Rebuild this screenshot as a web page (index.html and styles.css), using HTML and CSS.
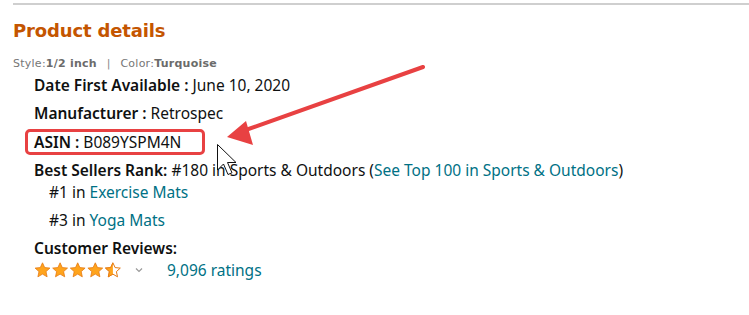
FILE: index.html
```html
<!DOCTYPE html>
<html lang="en">

<head>
    <meta charset="UTF-8">
    <meta name="viewport" content="width=device-width, initial-scale=1.0">
    <title>Product details</title>
    <link rel="stylesheet" href="styles.css">
</head>

<body>
    <div id="page">
        <hr class="rule">
        <h2 class="title">Product details</h2>
        <div class="variation">
            <span class="label">Style:</span><b>1/2 inch</b>
            <span class="sep">|</span>
            <span class="label">Color:</span><b>Turquoise</b>
        </div>
        <ul class="details">
            <li><b>Date First Available :</b> June 10, 2020</li>
            <li><b>Manufacturer :</b> Retrospec</li>
            <li class="asin"><span class="marked"><b>ASIN :</b> B089YSPM4N</span></li>
            <li>
                <b>Best Sellers Rank:</b> #180 in Sports &amp; Outdoors (<a href="#">See Top 100 in Sports &amp; Outdoors</a>)
                <ul class="ranks">
                    <li>#1 in <a href="#">Exercise Mats</a></li>
                    <li>#3 in <a href="#">Yoga Mats</a></li>
                </ul>
            </li>
            <li class="reviews">
                <b>Customer Reviews:</b>
                <div class="rating">
                    <span class="stars">
                        <svg width="88" height="16" viewBox="0 0 88 16">
                            <defs>
                                <polygon id="star" points="8.5,0.8 10.7,5.6 15.9,6.1 12,9.6 13.1,14.8 8.5,12.1 3.9,14.8 5,9.6 1.1,6.1 6.3,5.6"/>
                                <clipPath id="half"><rect x="70.4" y="0" width="8.5" height="16"/></clipPath>
                            </defs>
                            <use href="#star" x="0" fill="#ffa41c" stroke="#e47911" stroke-width="0.8"/>
                            <use href="#star" x="17.6" fill="#ffa41c" stroke="#e47911" stroke-width="0.8"/>
                            <use href="#star" x="35.2" fill="#ffa41c" stroke="#e47911" stroke-width="0.8"/>
                            <use href="#star" x="52.8" fill="#ffa41c" stroke="#e47911" stroke-width="0.8"/>
                            <use href="#star" x="70.4" fill="#fff" stroke="#e47911" stroke-width="1"/>
                            <g clip-path="url(#half)">
                                <use href="#star" x="70.4" fill="#ffa41c" stroke="#e47911" stroke-width="0.8"/>
                            </g>
                        </svg>
                    </span>
                    <span class="chevron">
                        <svg width="8" height="6" viewBox="0 0 8 6"><path d="M1 1.5 L4 4.5 L7 1.5" fill="none" stroke="#999" stroke-width="1.2"/></svg>
                    </span>
                    <a href="#" class="count">9,096 ratings</a>
                </div>
            </li>
        </ul>

        <svg class="markup" width="749" height="315" viewBox="0 0 749 315">
            <line x1="423" y1="67" x2="240" y2="132" stroke="#e84142" stroke-width="4" stroke-linecap="round"/>
            <polygon points="227,137 246,121 253,145" fill="#e84142"/>
            <path d="M217.5 144.5 L217.5 170 L223.5 164 L228 174.5 L232 172.8 L227.5 162.5 L236 162.5 Z" fill="#fff" stroke="#111" stroke-width="1"/>
        </svg>
    </div>
</body>

</html>
```

FILE: styles.css
```css
* {
    box-sizing: border-box;
}

body {
    margin: 0;
    background-color: #fff;
    color: #0f1111;
    font-family: 'Noto Sans', 'Open Sans', sans-serif;
    font-size: 14px;
}

#page {
    position: relative;
    width: 749px;
    height: 315px;
    padding-left: 13px;
    overflow: hidden;
}

.rule {
    margin: 3px 0 0 0;
    border: 0;
    border-top: 2px solid #cfcfcf;
}

.title {
    margin: 14px 0 0 0;
    font-family: 'DejaVu Sans', Verdana, sans-serif;
    font-size: 18px;
    font-weight: bold;
    line-height: 24px;
    color: #c45500;
    letter-spacing: -0.15px;
}

.variation {
    margin-top: 14px;
    font-family: 'DejaVu Sans', Verdana, sans-serif;
    font-size: 11px;
    line-height: 14px;
    letter-spacing: 0.25px;
    color: #767676;
}

.variation b {
    color: #6b6b6b;
}

.variation .sep {
    margin: 0 6px;
    color: #888;
}

.details {
    list-style: none;
    margin: 4px 0 0 0;
    padding: 0 0 0 21px;
}

.details li {
    font-size: 15.5px;
    line-height: 20px;
    margin-bottom: 8px;
}

.details b {
    font-weight: 600;
}

.details .asin {
    margin-top: 9px;
}

.marked {
    display: inline-block;
    width: 180px;
    margin: -3px 0 -3px -9px;
    padding: 0 6px;
    border: 3px solid #e84142;
    border-radius: 5px;
    vertical-align: top;
}

.ranks {
    list-style: none;
    margin: 2px 0 0 0;
    padding: 0 0 0 15px;
}

.ranks li:last-child {
    margin-bottom: 0;
}

a {
    color: #007185;
    text-decoration: none;
}

.rating {
    display: flex;
    align-items: center;
    height: 24px;
}

.stars svg {
    display: block;
}

.chevron {
    margin-left: 13px;
    display: flex;
}

.count {
    margin-left: 24px;
}

.markup {
    position: absolute;
    left: 0;
    top: 0;
    pointer-events: none;
}
```
